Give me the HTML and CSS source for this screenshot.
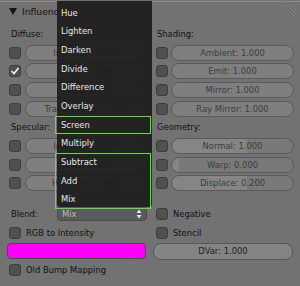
FILE: index.html
```html
<!DOCTYPE html>
<html lang="en">
<head>
    <meta charset="UTF-8">
    <title>Influence</title>
    <link rel="stylesheet" href="styles.css">
</head>
<body>
    <div class="panel">
        <div class="header">
            <span class="tri"></span>
            <span class="title">Influence</span>
            <svg class="grip" width="16" height="14" viewBox="0 0 16 14">
                <path d="M2 0 L16 12 M6 0 L16 8.5 M10 0 L16 5" stroke="#8c8c8c" stroke-width="1"/>
                <path d="M2 1 L15 12.5 M6 1 L15.5 9.3 M10 1 L15.5 5.8" stroke="#5e5e5e" stroke-width="0.8"/>
            </svg>
        </div>

        <div class="cols">
            <div class="col left">
                <div class="line label">Diffuse:</div>
                <div class="line"><span class="check"></span><div class="slider">Intensity: 1.000</div></div>
                <div class="line"><span class="check checked"><svg width="10" height="10" viewBox="0 0 10 10"><path d="M1.5 5 L4 7.5 L8.5 2" stroke="#f2f2f2" stroke-width="1.6" fill="none"/></svg></span><div class="slider">Color: 1.000</div></div>
                <div class="line"><span class="check"></span><div class="slider">Alpha: 1.000</div></div>
                <div class="line"><span class="check"></span><div class="slider">Translucency: 1.000</div></div>
                <div class="line label">Specular:</div>
                <div class="line"><span class="check"></span><div class="slider">Intensity: 1.000</div></div>
                <div class="line"><span class="check"></span><div class="slider">Color: 1.000</div></div>
                <div class="line"><span class="check"></span><div class="slider">Hardness: 1.000</div></div>
            </div>
            <div class="col right">
                <div class="line label">Shading:</div>
                <div class="line"><span class="check"></span><div class="slider">Ambient: 1.000</div></div>
                <div class="line"><span class="check"></span><div class="slider">Emit: 1.000</div></div>
                <div class="line"><span class="check"></span><div class="slider">Mirror: 1.000</div></div>
                <div class="line"><span class="check"></span><div class="slider">Ray Mirror: 1.000</div></div>
                <div class="line label">Geometry:</div>
                <div class="line"><span class="check"></span><div class="slider part-high">Normal: 1.000</div></div>
                <div class="line"><span class="check"></span><div class="slider part-low">Warp: 0.000</div></div>
                <div class="line"><span class="check"></span><div class="slider part-high">Displace: 0.200</div></div>
            </div>
        </div>

        <div class="cols bottom">
            <div class="col left">
                <div class="line">
                    <span class="label">Blend:</span>
                    <div class="select">
                        <span>Mix</span>
                        <svg width="6" height="10" viewBox="0 0 6 10"><path d="M3 0.5 L5.5 4 L0.5 4 Z M3 9.5 L5.5 6 L0.5 6 Z" fill="#e6e6e6"/></svg>
                    </div>
                </div>
                <div class="line"><span class="check"></span><span class="text">RGB to Intensity</span></div>
                <div class="line"><div class="swatch"></div></div>
                <div class="line"><span class="check"></span><span class="text">Old Bump Mapping</span></div>
            </div>
            <div class="col right">
                <div class="line"><span class="check"></span><span class="text">Negative</span></div>
                <div class="line"><span class="check"></span><span class="text">Stencil</span></div>
                <div class="line"><div class="button">DVar: 1.000</div></div>
            </div>
        </div>

        <div class="menu">
            <div class="item">Hue</div>
            <div class="item">Lighten</div>
            <div class="item">Darken</div>
            <div class="item">Divide</div>
            <div class="item">Difference</div>
            <div class="item">Overlay</div>
            <div class="hl"><div class="item">Screen</div></div>
            <div class="item">Multiply</div>
            <div class="hl">
                <div class="item">Subtract</div>
                <div class="item">Add</div>
                <div class="item">Mix</div>
            </div>
        </div>
    </div>
</body>
</html>
```

FILE: styles.css
```css
* {
    box-sizing: border-box;
}

body {
    margin: 0;
    width: 300px;
    height: 286px;
    overflow: hidden;
    background: #727272;
    color: #111;
    font-family: 'DejaVu Sans', sans-serif;
    font-size: 8.4px;
}

.panel {
    position: relative;
    height: 286px;
}

/* panel header */
.header {
    height: 23.67px;
    margin-top: 1px;
    padding: 0 4px 3px 9px;
    border-top: 1px solid #8c8c8c;
    display: flex;
    align-items: center;
}

.tri {
    width: 0;
    height: 0;
    border-left: 4px solid transparent;
    border-right: 4px solid transparent;
    border-top: 7px solid #151515;
}

.title {
    margin-left: 5px;
    font-size: 9.2px;
}

.grip {
    margin-left: auto;
}

/* columns */
.cols {
    display: grid;
    grid-template-columns: 140px 141px;
    column-gap: 6px;
    padding-left: 7px;
}

.cols.bottom {
    margin-top: 12px;
}

.line {
    height: 18.67px;
    display: flex;
    align-items: center;
}

.label {
    padding-left: 4px;
}

.check {
    flex: none;
    width: 12px;
    height: 12px;
    margin-left: 2px;
    border: 1px solid #3c3c3c;
    border-radius: 3px;
    background: #505050;
    display: flex;
    align-items: center;
    justify-content: center;
}

.right .check {
    margin-left: 3px;
}

.slider {
    flex: 1;
    height: 16px;
    margin-left: 4px;
    border: 1px solid #5a5a5a;
    border-radius: 8px;
    background: #7f7f7f;
    color: #3c3c3c;
    text-align: center;
    line-height: 14px;
    white-space: nowrap;
    overflow: hidden;
}

.right .slider {
    margin-left: 3px;
}

.slider.part-high {
    background: linear-gradient(to right, #858585 62%, #797979 62%);
}

.slider.part-low {
    background: linear-gradient(to right, #858585 6%, #797979 6%);
}

.text {
    margin-left: 5px;
}

.select {
    margin-left: auto;
    width: 90px;
    height: 15px;
    padding: 0 4px;
    border: 1px solid #4a4a4a;
    border-radius: 4px;
    background: #5a5a5a;
    color: #bdbdbd;
    display: flex;
    align-items: center;
    justify-content: space-between;
}

.swatch {
    width: 139px;
    height: 16px;
    border: 1px solid #4a4a4a;
    border-radius: 4px;
    background: #ff00ff;
}

.button {
    width: 140px;
    height: 17px;
    border: 1px solid #565656;
    border-radius: 8px;
    background: #848484;
    color: #1e1e1e;
    text-align: center;
    line-height: 15px;
}

/* open blend menu */
.menu {
    position: absolute;
    left: 57px;
    top: 0;
    width: 95px;
    height: 206px;
    padding-top: 2.67px;
    background: rgba(28, 28, 28, 0.92);
    border-radius: 0 0 3px 3px;
    color: #e8e8e8;
}

.item {
    height: 18.67px;
    line-height: 18.67px;
    padding-left: 4px;
}

.hl {
    margin-left: -2px;
    padding-left: 2px;
    margin-right: 1px;
    outline: 1px solid #5fe03c;
    outline-offset: -1px;
}
```
